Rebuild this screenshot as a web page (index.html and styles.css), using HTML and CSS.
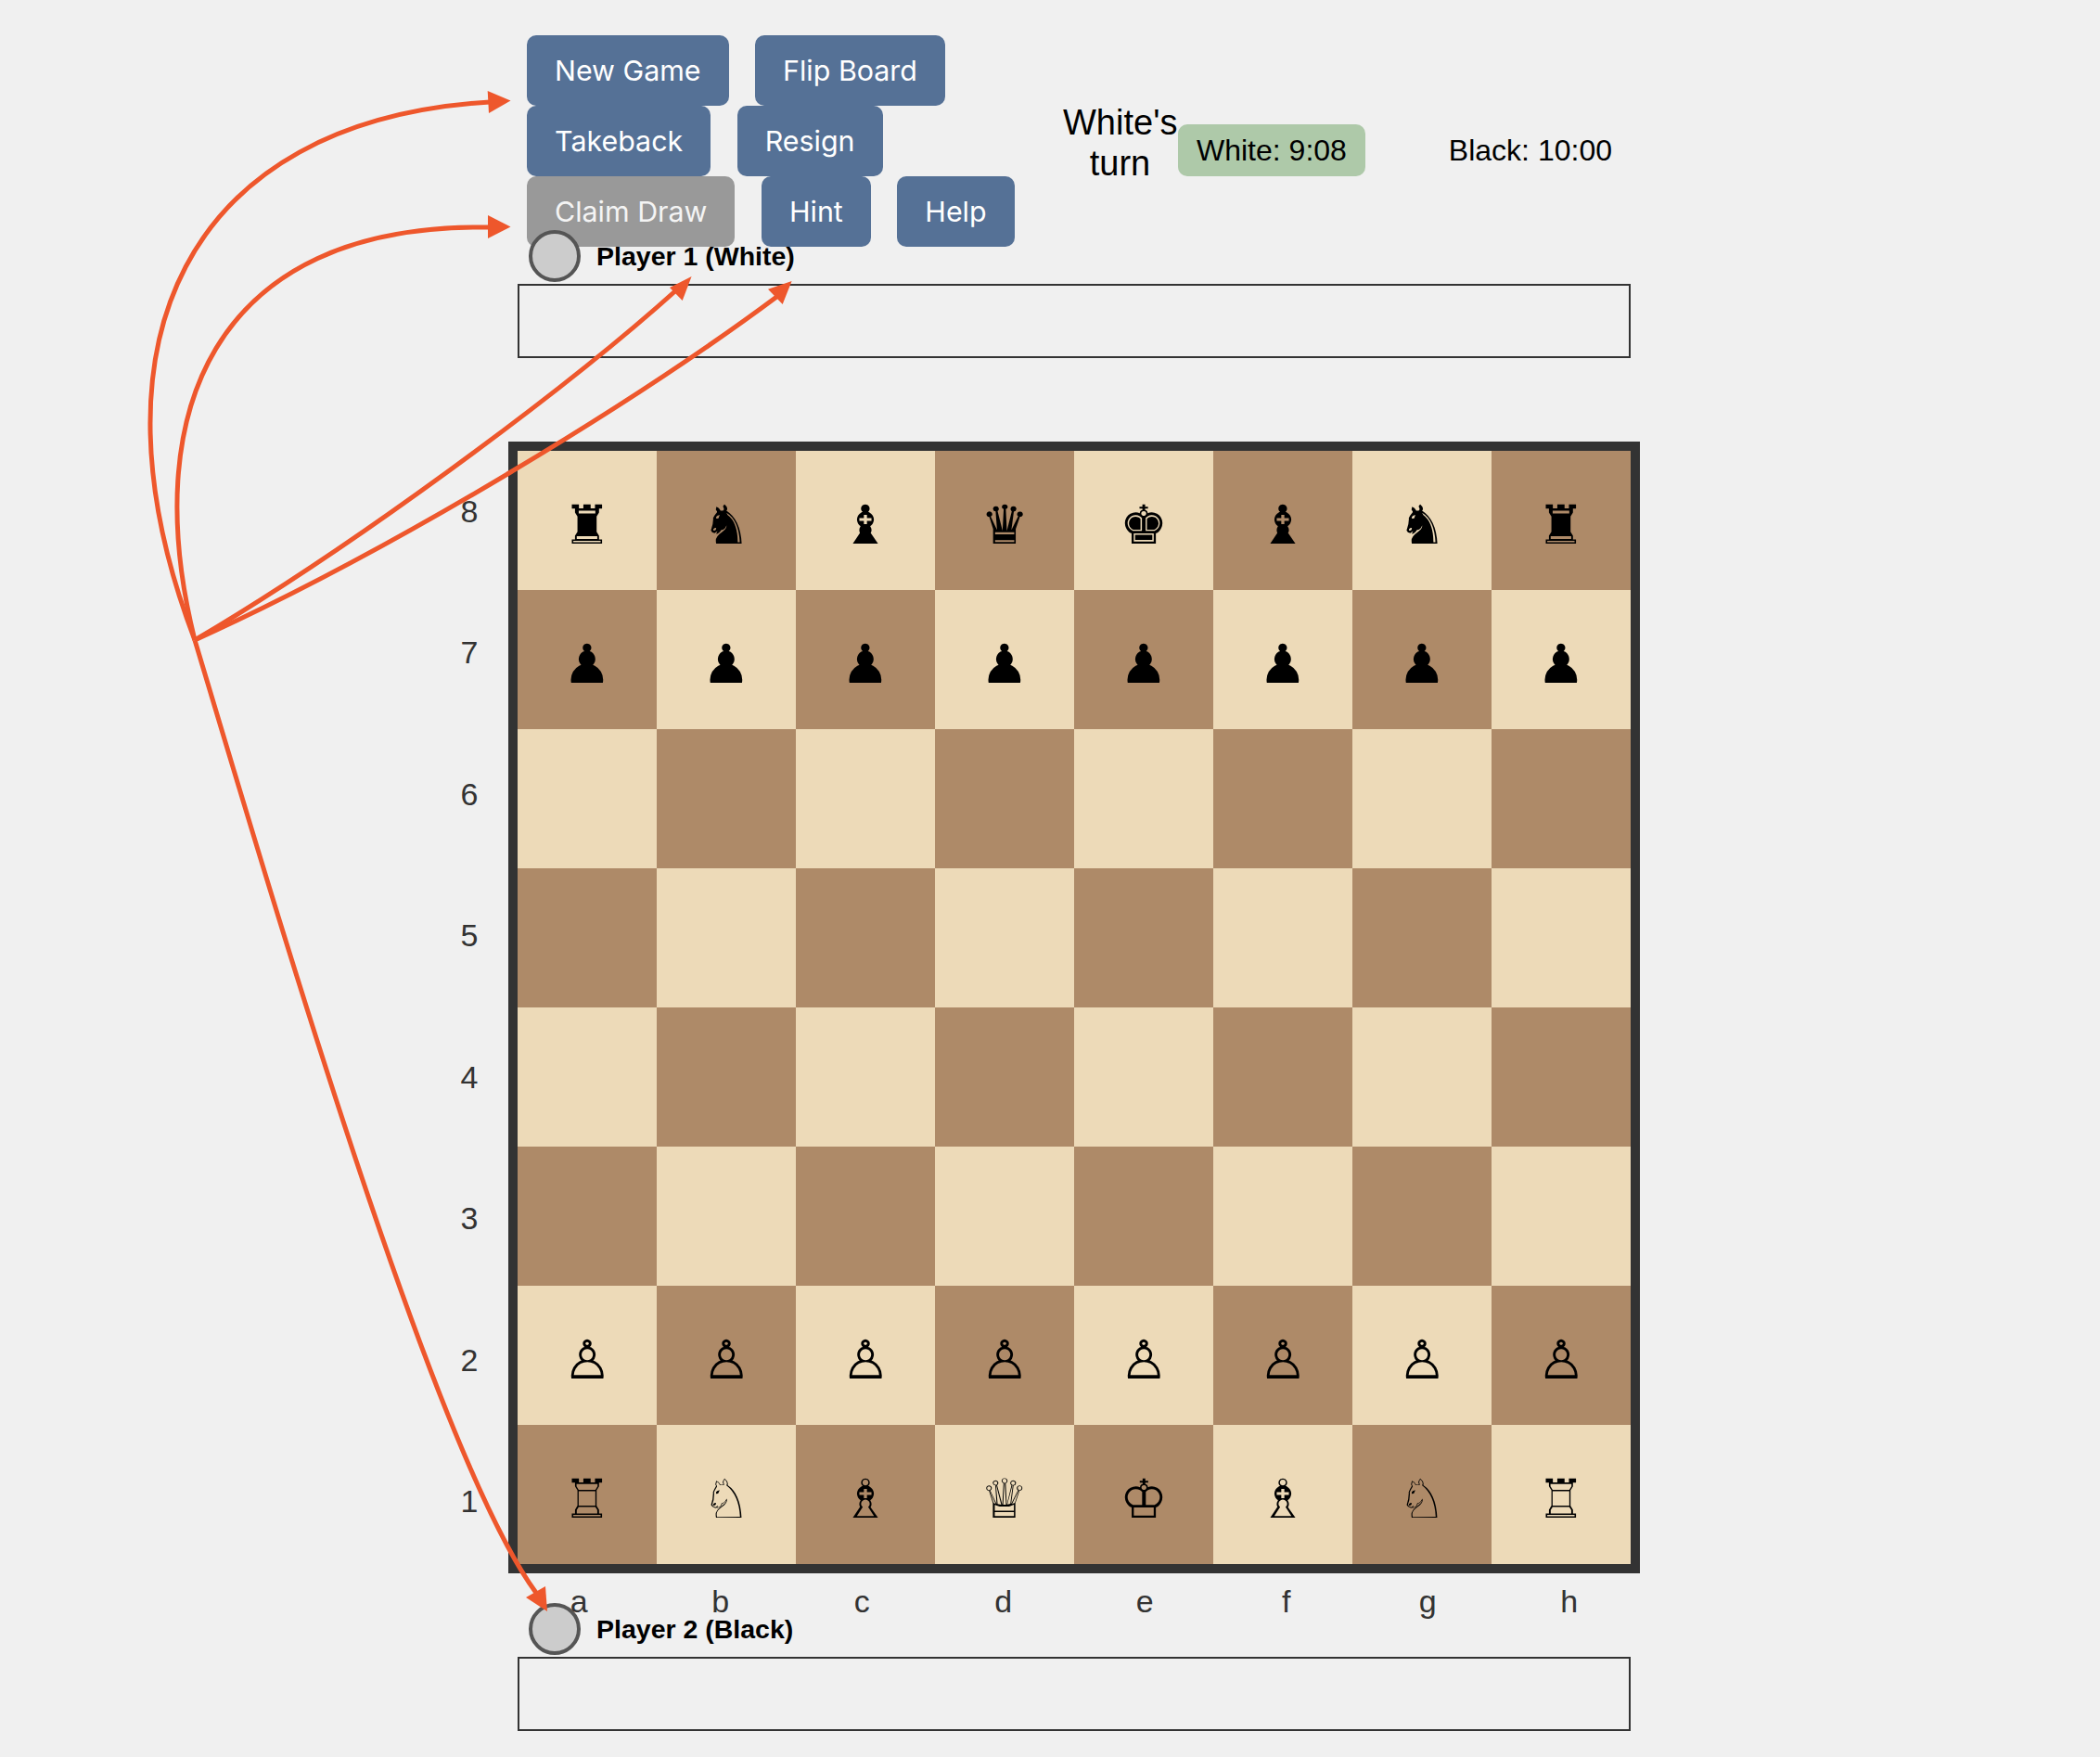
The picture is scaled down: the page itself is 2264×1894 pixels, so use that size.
FILE: index.html
```html
<!DOCTYPE html>
<html lang="en">
<head>
<meta charset="utf-8">
<title>Chess</title>
<link rel="stylesheet" href="styles.css">
</head>
<body>
<main class="game">
  <header class="header">
    <div class="controls">
      <button class="btn">New Game</button>
      <button class="btn">Flip Board</button>
      <button class="btn">Takeback</button>
      <button class="btn">Resign</button>
      <button class="btn btn-disabled">Claim Draw</button>
      <button class="btn">Hint</button>
      <button class="btn">Help</button>
    </div>
    <div class="status">White's turn</div>
    <div class="timers">
      <div class="timer timer-active">White: 9:08</div>
      <div class="timer">Black: 10:00</div>
    </div>
  </header>

  <div class="player"><span class="avatar"></span><span class="player-name">Player 1 (White)</span></div>
  <div class="captured"></div>

  <div class="board-wrap">
    <div class="ranks"><span>8</span><span>7</span><span>6</span><span>5</span><span>4</span><span>3</span><span>2</span><span>1</span></div>
    <div class="board">
      <div class="sq l">♜</div><div class="sq d">♞</div><div class="sq l">♝</div><div class="sq d">♛</div><div class="sq l">♚</div><div class="sq d">♝</div><div class="sq l">♞</div><div class="sq d">♜</div>
      <div class="sq d">♟</div><div class="sq l">♟</div><div class="sq d">♟</div><div class="sq l">♟</div><div class="sq d">♟</div><div class="sq l">♟</div><div class="sq d">♟</div><div class="sq l">♟</div>
      <div class="sq l"></div><div class="sq d"></div><div class="sq l"></div><div class="sq d"></div><div class="sq l"></div><div class="sq d"></div><div class="sq l"></div><div class="sq d"></div>
      <div class="sq d"></div><div class="sq l"></div><div class="sq d"></div><div class="sq l"></div><div class="sq d"></div><div class="sq l"></div><div class="sq d"></div><div class="sq l"></div>
      <div class="sq l"></div><div class="sq d"></div><div class="sq l"></div><div class="sq d"></div><div class="sq l"></div><div class="sq d"></div><div class="sq l"></div><div class="sq d"></div>
      <div class="sq d"></div><div class="sq l"></div><div class="sq d"></div><div class="sq l"></div><div class="sq d"></div><div class="sq l"></div><div class="sq d"></div><div class="sq l"></div>
      <div class="sq l">♙</div><div class="sq d">♙</div><div class="sq l">♙</div><div class="sq d">♙</div><div class="sq l">♙</div><div class="sq d">♙</div><div class="sq l">♙</div><div class="sq d">♙</div>
      <div class="sq d">♖</div><div class="sq l">♘</div><div class="sq d">♗</div><div class="sq l">♕</div><div class="sq d">♔</div><div class="sq l">♗</div><div class="sq d">♘</div><div class="sq l">♖</div>
    </div>
    <div class="files"><span>a</span><span>b</span><span>c</span><span>d</span><span>e</span><span>f</span><span>g</span><span>h</span></div>
  </div>

  <div class="player player-bottom"><span class="avatar"></span><span class="player-name">Player 2 (Black)</span></div>
  <div class="captured"></div>
</main>

<svg class="arrows" viewBox="0 0 2264 1894" aria-hidden="true">
  <g class="arrow-line">
    <path d="M210 690C88 370 200 130 528 110"/>
    <path d="M210 690C150 450 225 240 528 245"/>
    <path d="M210 690C380 590 610 420 730 312"/>
    <path d="M210 690C430 590 690 430 840 318"/>
    <path d="M210 690C300 990 470 1570 578 1717"/>
  </g>
  <g class="arrow-head">
    <polygon points="550.5,108.6 525.7,98 527,122"/>
    <polygon points="550.5,244.5 526,232 526,257"/>
    <polygon points="745.6,298 722,310 735.7,324"/>
    <polygon points="853.6,303 828,311.7 843.7,328"/>
    <polygon points="590,1737 567,1722 588,1710"/>
  </g>
</svg>
</body>
</html>
```
FILE: styles.css
```css
* { box-sizing: border-box; }

html, body { margin: 0; padding: 0; }

body {
  position: relative;
  background: #f0f0f0;
  font-family: "Liberation Sans", Arial, sans-serif;
  color: #000;
}

.game {
  width: 1758px;
  padding: 38px 0 28px 558px;
}

/* Header */
.header {
  display: flex;
  align-items: center;
  height: 228px;
  margin-bottom: -18px;
}

.controls {
  display: flex;
  flex-wrap: wrap;
  align-content: flex-start;
  column-gap: 28.5px;
  width: 578px;
  height: 228px;
  margin-left: 10px;
  padding-right: 20px;
}

.btn {
  height: 76px;
  padding: 0 30px;
  border: 0;
  border-radius: 10px;
  background: #557196;
  color: #fff;
  font-family: Inter, "Liberation Sans", sans-serif;
  font-size: 30.4px;
  white-space: nowrap;
}

.btn-disabled {
  background: #999;
  color: #f4f4f4;
}

.status {
  width: 123px;
  margin-top: 3px;
  font-size: 38px;
  line-height: 44px;
  text-align: center;
}

.timers {
  display: flex;
  gap: 70px;
  margin: 20px 0 0 1px;
}

.timer {
  height: 56px;
  padding: 0 20px;
  border-radius: 10px;
  font-size: 32px;
  line-height: 56px;
  white-space: nowrap;
}

.timer-active { background: #aec9a9; }

/* Players */
.player {
  display: flex;
  align-items: center;
  gap: 17px;
  height: 56px;
  padding-left: 12px;
}

.player-bottom { margin-top: 32px; }

.avatar {
  flex: none;
  width: 56px;
  height: 56px;
  border: 4px solid #555;
  border-radius: 50%;
  background: #ccc;
}

.player-name {
  font-size: 28.5px;
  font-weight: 700;
}

.captured {
  width: 1200px;
  height: 80px;
  margin-top: 2px;
  border: 2px solid #333;
}

/* Board */
.board-wrap {
  position: relative;
  width: 1220px;
  margin: 90px 0 0 -10px;
}

.board {
  display: grid;
  grid-template-columns: repeat(8, 150px);
  grid-auto-rows: 150px;
  border: 10px solid #333;
}

.sq {
  display: flex;
  justify-content: center;
  align-items: center;
  padding-top: 9px;
  font-family: "DejaVu Sans", sans-serif;
  font-size: 58px;
  line-height: 1;
  color: #000;
}

.l { background: #eddab8; }
.d { background: #ae8a68; }

.ranks,
.files {
  position: absolute;
  display: flex;
  font-size: 34px;
  color: #333;
  text-align: center;
}

.ranks {
  top: -1px;
  left: -62px;
  flex-direction: column;
  justify-content: space-around;
  width: 40px;
  height: 100%;
}

.files {
  top: calc(100% + 11px);
  left: 0;
  width: 100%;
}

.files span { flex: 1; }

/* Annotation overlay */
.arrows {
  position: absolute;
  top: 0;
  left: 0;
  width: 2264px;
  height: 1894px;
  pointer-events: none;
}

.arrow-line path {
  fill: none;
  stroke: #ee572c;
  stroke-width: 5;
}

.arrow-head polygon { fill: #ee572c; }
```
